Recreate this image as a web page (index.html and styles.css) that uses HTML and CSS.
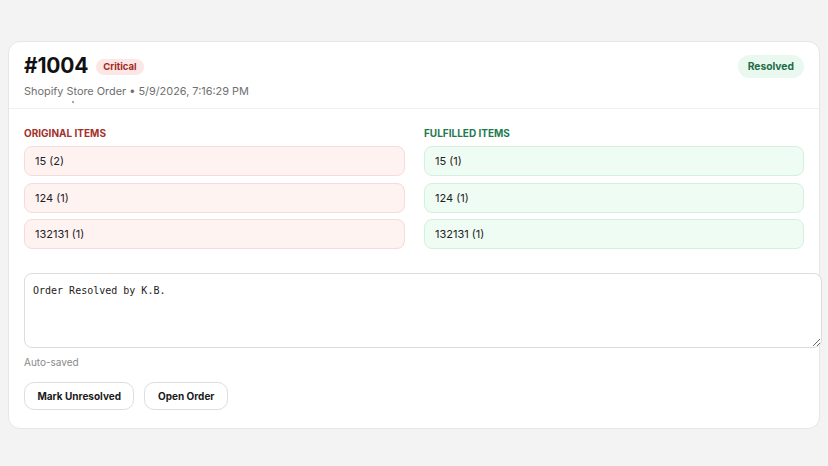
FILE: index.html
```html
<!DOCTYPE html>
<html lang="en">
<head>
<meta charset="utf-8">
<title>Order #1004</title>
<link rel="stylesheet" href="styles.css">
</head>
<body>
<div class="card">
  <div class="header">
    <div class="head-left">
      <div class="title-row">
        <h1 class="title">#1004</h1>
        <span class="badge badge-critical">Critical</span>
      </div>
      <div class="subtitle">Shopify Store Order • 5/9/2026, 7:16:29 PM</div>
      <div class="dot-row"><span class="tiny-dot"></span></div>
    </div>
    <span class="badge badge-resolved">Resolved</span>
  </div>
  <div class="body">
    <div class="columns">
      <div class="col">
        <div class="label label-red">ORIGINAL ITEMS</div>
        <div class="item item-red">15 (2)</div>
        <div class="item item-red">124 (1)</div>
        <div class="item item-red">132131 (1)</div>
      </div>
      <div class="col">
        <div class="label label-green">FULFILLED ITEMS</div>
        <div class="item item-green">15 (1)</div>
        <div class="item item-green">124 (1)</div>
        <div class="item item-green">132131 (1)</div>
      </div>
    </div>
    <textarea class="notes">Order Resolved by K.B.</textarea>
    <div class="autosave">Auto-saved</div>
    <div class="actions">
      <button class="btn">Mark Unresolved</button>
      <button class="btn">Open Order</button>
    </div>
  </div>
</div>
</body>
</html>
```
FILE: styles.css
```css
html, body {
  margin: 0;
  padding: 0;
  background: #f3f3f3;
}
body {
  padding: 41px 8px 0 8px;
  font-family: Inter, "Liberation Sans", sans-serif;
  color: #1a1a1a;
}
.card {
  background: #ffffff;
  border: 1px solid #e6e6e6;
  border-radius: 12px;
  box-sizing: border-box;
  width: 812px;
  height: 388px;
}
.header {
  box-sizing: border-box;
  display: flex;
  justify-content: space-between;
  align-items: flex-start;
  padding: 10px 15px 0 15px;
  height: 67px;
  border-bottom: 1px solid #f0f0f0;
}
.title-row {
  display: flex;
  align-items: center;
  gap: 8px;
}
.title {
  margin: 0;
  font-size: 21px;
  font-weight: 700;
  line-height: 28px;
  letter-spacing: -0.2px;
  color: #111;
}
.badge {
  display: inline-block;
  font-weight: 700;
}
.badge-critical {
  background: #fde7e6;
  color: #9f2a22;
  font-size: 9.5px;
  line-height: 16px;
  padding: 0 7px;
  border-radius: 8px;
  margin-top: 1px;
}
.badge-resolved {
  background: #eaf9f0;
  color: #1f6b47;
  font-size: 10.3px;
  line-height: 23px;
  padding: 0 10px;
  border-radius: 12px;
  margin-top: 3px;
}
.subtitle {
  font-size: 10.9px;
  color: #6f6f6f;
  margin-top: 3px;
  line-height: 16px;
}
.dot-row {
  height: 6px;
  padding-left: 48px;
}
.tiny-dot {
  display: block;
  width: 2px;
  height: 2px;
  border-radius: 50%;
  background: #888;
  margin-top: 2px;
}
.body {
  padding: 0 15px;
}
.columns {
  display: grid;
  grid-template-columns: 381px 380px;
  column-gap: 19px;
  padding-top: 18px;
}
.col {
  display: flex;
  flex-direction: column;
  gap: 6.5px;
}
.label {
  font-size: 10px;
  font-weight: 700;
  line-height: 12px;
  margin-bottom: 0.5px;
}
.label-red { color: #a3302a; }
.label-green { color: #1e7a4e; }
.item {
  box-sizing: border-box;
  height: 30px;
  border-radius: 8px;
  font-size: 11px;
  line-height: 28px;
  padding: 0 10px;
  color: #222;
}
.item-red {
  background: #fff3f2;
  border: 1px solid #f7dada;
}
.item-green {
  background: #effcf4;
  border: 1px solid #d3f0de;
}
.notes {
  display: block;
  width: 100%;
  height: 55px;
  margin-top: 24px;
  padding: 10px 8px 8px 8px;
  border: 1px solid #dcdcdc;
  border-radius: 8px;
  font-family: "DejaVu Sans Mono", "Liberation Mono", monospace;
  font-size: 10px;
  line-height: 14px;
  color: #222;
  background: #fff;
  resize: vertical;
}
.autosave {
  font-size: 10px;
  color: #8a8a8a;
  margin-top: 7px;
  line-height: 14px;
}
.actions {
  display: flex;
  gap: 10px;
  margin-top: 13px;
}
.btn {
  font-family: Inter, "Liberation Sans", sans-serif;
  font-size: 10px;
  font-weight: 700;
  color: #1a1a1a;
  background: #fff;
  border: 1px solid #dedede;
  border-radius: 10px;
  height: 28px;
  padding: 0 12.5px;
}
```
